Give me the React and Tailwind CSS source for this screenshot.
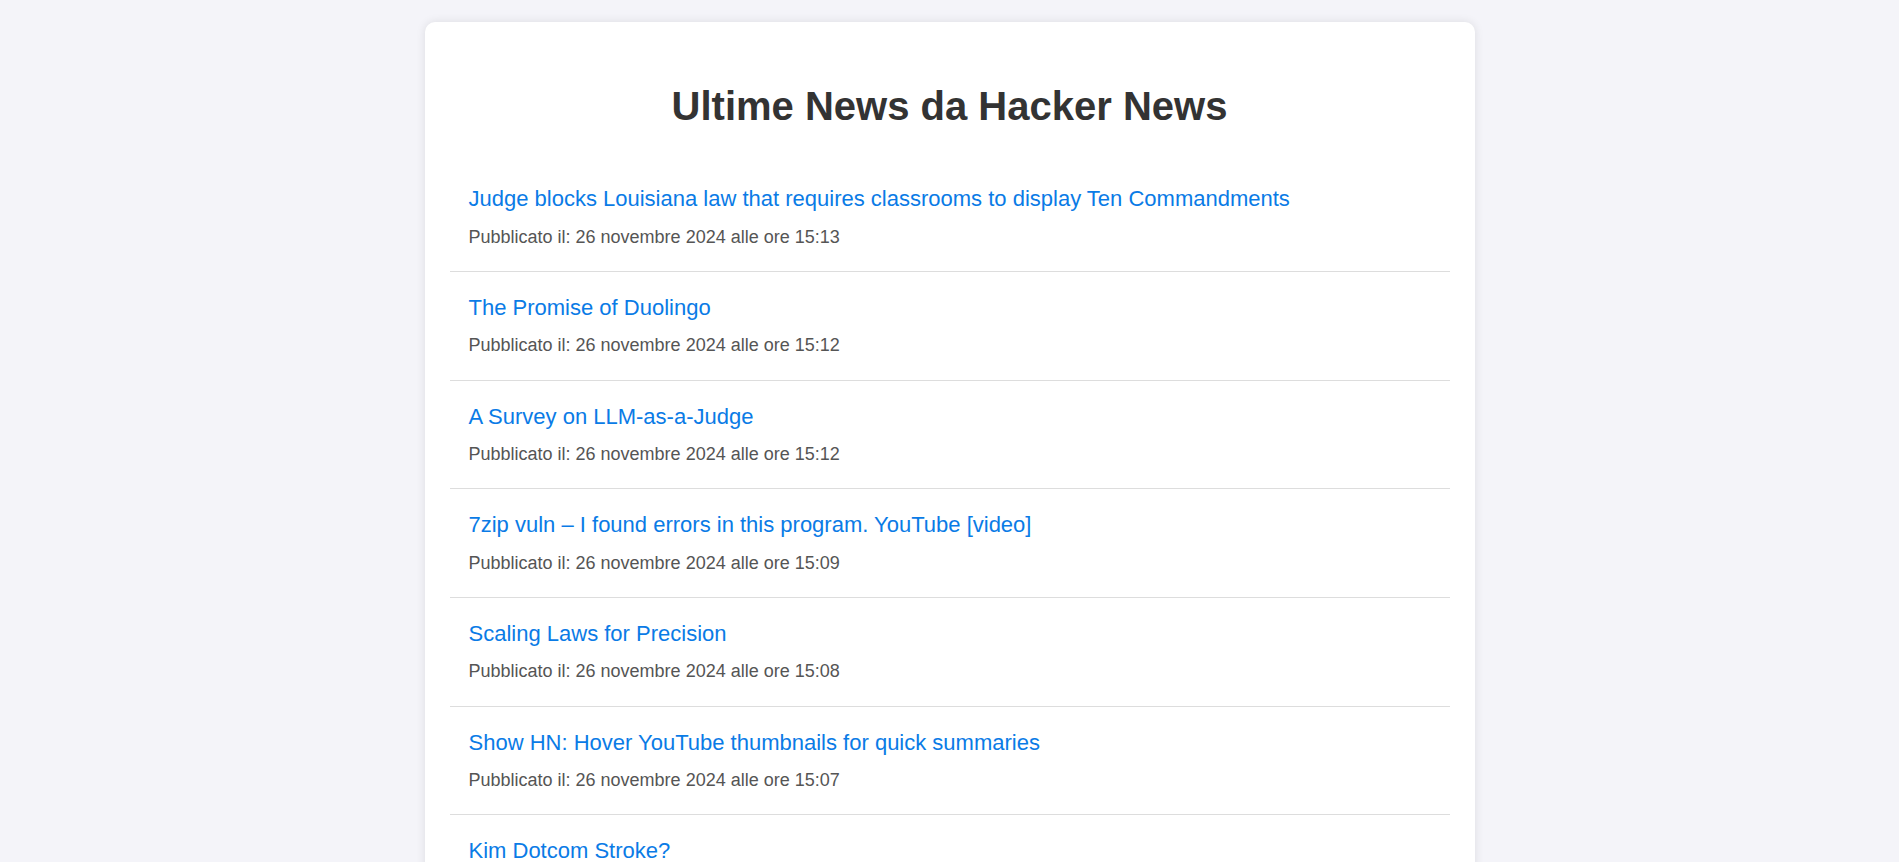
export default function App() {
  const items = [
    { title: "Judge blocks Louisiana law that requires classrooms to display Ten Commandments", time: "15:13" },
    { title: "The Promise of Duolingo", time: "15:12" },
    { title: "A Survey on LLM-as-a-Judge", time: "15:12" },
    { title: "7zip vuln – I found errors in this program. YouTube [video]", time: "15:09" },
    { title: "Scaling Laws for Precision", time: "15:08" },
    { title: "Show HN: Hover YouTube thumbnails for quick summaries", time: "15:07" },
    { title: "Kim Dotcom Stroke?", time: "15:05" },
    { title: "The Architecture of Open Source Applications", time: "15:03" },
  ];
  return (
    <div className="min-h-screen bg-[#f4f4f9] pt-[22px] pb-[22px]" style={{ fontFamily: '"Liberation Sans", Arial, sans-serif' }}>
      <div className="w-[1050px] mx-auto bg-white rounded-[10px] shadow-[0_0_10px_rgba(0,0,0,0.1)] px-[25px] pt-[61px] pb-[20px]">
        <h1 className="text-[40px] leading-[46px] font-bold text-center text-[#333]">Ultime News da Hacker News</h1>
        <ul className="mt-[34.2px]">
          {items.map((it, i) => (
            <li key={i} className="border-b border-[#ddd] px-[19px] pt-[23px] pb-[23.3px]">
              <a href="#" className="block text-[22px] leading-[25px] text-[#0a7be6]">{it.title}</a>
              <p className="mt-[15.4px] text-[18px] leading-[21px] text-[#555]">Pubblicato il: 26 novembre 2024 alle ore {it.time}</p>
            </li>
          ))}
        </ul>
      </div>
    </div>
  );
}
